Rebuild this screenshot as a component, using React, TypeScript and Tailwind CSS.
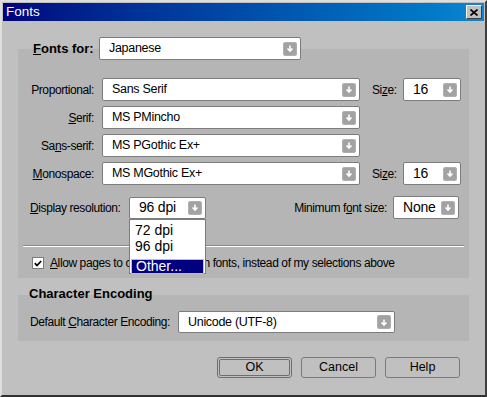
import React from "react";

const font = { fontFamily: '"Liberation Sans", Arial, sans-serif' };

const Arrow = () => (
  <span className="flex h-[14px] w-[14px] shrink-0 items-center justify-center rounded-[3px] bg-[#a2a2a2] shadow-[inset_0_0_0_1px_#b0b0b0]">
    <svg width="8" height="9" viewBox="0 0 8 9">
      <path d="M4 1.5v5.5M1.5 4.5L4 7l2.5-2.5" stroke="white" strokeWidth="1.6" fill="none" />
    </svg>
  </span>
);

function Select({ text, className, big }: { text: string; className: string; big?: boolean }) {
  return (
    <div
      className={`flex items-center justify-between rounded-[2px] border border-[#7c7c7c] bg-white pl-[9px] pr-[3px] ${className}`}
    >
      <span className={big ? "text-[14px] tracking-[-0.2px]" : "text-[12.5px] tracking-[-0.3px]"}>{text}</span>
      <Arrow />
    </div>
  );
}

function Row({ label, value, size }: { label: [string, string, string]; value: string; size?: boolean }) {
  return (
    <div className="flex h-[23px] items-center">
      <div className="w-[76px] text-right text-[12px] tracking-[-0.4px]">
        {label[0]}
        <span className="underline">{label[1]}</span>
        {label[2]}
      </div>
      <Select text={value} className="ml-[8px] h-[23px] w-[258px]" />
      {size && (
        <>
          <div className="ml-[12px] w-[24px] text-[12px] tracking-[-0.4px]">
            Si<span className="underline">z</span>e:
          </div>
          <Select text="16" className="ml-[7px] h-[23px] w-[58px]" big />
        </>
      )}
    </div>
  );
}

function Btn({ children, def }: { children: React.ReactNode; def?: boolean }) {
  if (def)
    return (
      <div className="h-[21px] w-[75px] rounded-[3px] border border-[#6e6e6e] p-[1px]">
        <div className="flex h-full w-full items-center justify-center rounded-[2px] border border-[#6e6e6e] text-[12.5px]">
          {children}
        </div>
      </div>
    );
  return (
    <div className="flex h-[21px] w-[75px] items-center justify-center rounded-[3px] border border-[#7a7a7a] text-[12.5px]">
      {children}
    </div>
  );
}

export default function App() {
  return (
    <div style={font} className="h-[397px] w-[487px] overflow-hidden text-black">
      <div className="h-[397px] w-[487px] border-2 border-t-[#dedede] border-l-[#dedede] border-r-[#404040] border-b-[#303030] bg-[#c0c0c0] p-[1px]">
        {/* title bar */}
        <div className="flex h-[18px] items-center justify-between bg-gradient-to-r from-[#000080] to-[#1086d2] pl-[3px] pr-[2px]">
          <span className="text-[13.5px] leading-none text-white">Fonts</span>
          <div className="flex h-[14px] w-[16px] items-center justify-center border border-t-white border-l-white border-r-[#404040] border-b-[#404040] bg-[#c0c0c0]">
            <svg width="8" height="7" viewBox="0 0 8 7">
              <path d="M0.5 0.5L7.5 6.5M7.5 0.5L0.5 6.5" stroke="black" strokeWidth="1.6" />
            </svg>
          </div>
        </div>

        {/* Fonts for row */}
        <div className="relative z-10 ml-[30px] mt-[16px] flex h-[23px] items-center">
          <div className="w-[66px] text-[13px] font-bold">
            <span className="underline">F</span>onts for:
          </div>
          <Select text="Japanese" className="h-[23px] w-[202px]" />
        </div>

        {/* panel 1 */}
        <div className="relative ml-[15px] mt-[-11px] w-[451px] bg-[#b5b5b5] pt-[29px] pb-[9px]">
          <div className="flex flex-col gap-[5px]">
            <Row label={["Proportional:", "", ""]} value="Sans Serif" size />
            <Row label={["", "S", "erif:"]} value="MS PMincho" />
            <Row label={["Sa", "n", "s-serif:"]} value="MS PGothic Ex+" />
            <Row label={["", "M", "onospace:"]} value="MS MGothic Ex+" size />
          </div>

          <div className="mt-[11px] flex h-[23px] items-center pl-[12px] pr-[10px]">
            <div className="w-[99px] text-[12px] tracking-[-0.4px]">
              <span className="underline">D</span>isplay resolution:
            </div>
            <div className="relative">
              <Select text="96 dpi" className="h-[22px] w-[77px]" big />
              <div className="absolute left-0 top-[22px] z-20 flex h-[55px] w-[77px] flex-col border border-[#7c7c7c] bg-white">
                <div className="pl-[5px] pt-[2px] text-[14px] leading-[16px]">72 dpi</div>
                <div className="pl-[5px] text-[14px] leading-[16px]">96 dpi</div>
                <div className="mt-[3px] h-px bg-[#9a9a9a]" />
                <div className="mx-[1px] mt-[2px] h-[15px] border border-[#d8c070] bg-[#000080] pl-[4px] text-[14px] leading-[13px] text-white">
                  Other...
                </div>
              </div>
            </div>
            <div className="ml-auto mr-[6px] text-[12px] tracking-[-0.4px]">
              Minimum f<span className="underline">o</span>nt size:
            </div>
            <Select text="None" className="h-[23px] w-[66px]" big />
          </div>

          <div className="mx-[5px] mt-[26px] h-[2px] border-t border-t-[#8a8a8a] border-b border-b-white" />

          <div className="mt-[10px] flex items-center pl-[14px]">
            <div className="flex h-[12px] w-[12px] items-center justify-center border border-[#7c7c7c] bg-white">
              <svg width="8" height="7" viewBox="0 0 8 7">
                <path d="M0.8 3.2L3 5.5L7.2 1" stroke="black" strokeWidth="1.8" fill="none" />
              </svg>
            </div>
            <div className="ml-[6px] text-[12px] leading-[12px] tracking-[-0.4px]">
              <span className="underline">A</span>llow pages to choose their own fonts, instead of my selections above
            </div>
          </div>
        </div>

        {/* Character encoding */}
        <div className="relative z-10 ml-[26px] mt-[8px] text-[13px] font-bold leading-[16px]">Character Encoding</div>
        <div className="ml-[15px] mt-[-7px] flex w-[451px] items-center bg-[#b5b5b5] pl-[12px] pt-[16px] pb-[8px]">
          <div className="w-[148px] text-[12px] tracking-[-0.4px]">
            Default <span className="underline">C</span>haracter Encoding:
          </div>
          <Select text="Unicode (UTF-8)" className="h-[22px] w-[217px]" />
        </div>

        {/* buttons */}
        <div className="ml-[214px] mt-[16px] flex gap-[9px]">
          <Btn def>OK</Btn>
          <Btn>Cancel</Btn>
          <Btn>Help</Btn>
        </div>
      </div>
    </div>
  );
}
